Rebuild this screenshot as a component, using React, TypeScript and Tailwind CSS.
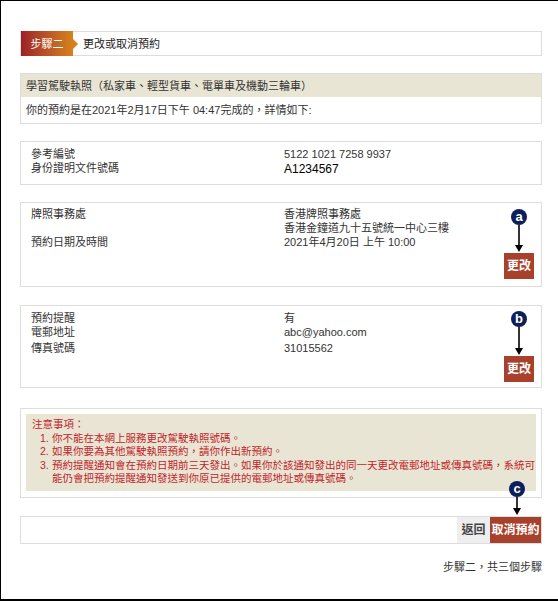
import React from 'react'

const font = "font-['Liberation_Sans','Noto_Sans_CJK_TC',sans-serif]"

function Marker({ letter, top, left, len }: { letter: string; top: number; left: number; len: number }) {
  return (
    <div className="absolute flex w-[16px] flex-col items-center" style={{ top, left }}>
      <div className="flex h-[16px] w-[16px] items-center justify-center rounded-full bg-[#0c1f5b] pb-[2px] text-[13px] font-bold leading-none text-white">
        {letter}
      </div>
      <svg width="16" height={len} viewBox={`0 0 16 ${len}`}>
        <line x1="8" y1="0" x2="8" y2={len - 5} stroke="#000" strokeWidth="1.6" />
        <polygon points={`4,${len - 7} 12,${len - 7} 8,${len}`} fill="#000" />
      </svg>
    </div>
  )
}

function EditButton() {
  return (
    <div className="flex justify-end pr-[7px]">
      <button className="h-[26px] w-[30px] bg-[#a8412b] text-[12px] font-bold text-white">更改</button>
    </div>
  )
}

export default function App() {
  return (
    <div className={`${font} relative h-[603px] w-[558px] overflow-hidden bg-white text-[11px] leading-[14px] text-[#333]`}>
      <div className="h-[601px] border-b-2 border-l border-t border-black pl-[19px] pr-[16px] pt-[30px]">
        {/* step header */}
        <div className="flex h-[25px] items-center border border-[#ddd]">
          <div className="relative flex h-[25px] w-[52px] items-center justify-center bg-gradient-to-r from-[#9d1f26] to-[#d4821d] text-white">
            步驟二
            <span className="absolute left-[52px] top-[8px] h-0 w-0 border-y-[5px] border-l-[5px] border-y-transparent border-l-[#d4821d]" />
          </div>
          <span className="ml-[10px] text-[#222]">更改或取消預約</span>
        </div>

        {/* licence summary */}
        <div className="mt-[17px] border border-[#ddd]">
          <div className="flex h-[23px] items-center bg-[#e9e5d5] pl-[5px]">學習駕駛執照（私家車、輕型貨車、電單車及機動三輪車）</div>
          <div className="flex h-[26px] items-center pl-[5px]">你的預約是在2021年2月17日下午 04:47完成的，詳情如下:</div>
        </div>

        {/* reference */}
        <div className="mt-[17px] grid grid-cols-[253px_1fr] border border-[#ddd] px-[10px] pb-[7px] pt-[5px]">
          <div>參考編號</div>
          <div>5122 1021 7258 9937</div>
          <div>身份證明文件號碼</div>
          <div className="text-[12px] leading-[16px] text-black">A1234567</div>
        </div>

        {/* office */}
        <div className="mt-[17px] border border-[#ddd] pb-[7px] pt-[4px]">
          <div className="grid grid-cols-[253px_1fr] px-[10px]">
            <div>牌照事務處</div>
            <div>
              香港牌照事務處
              <br />
              香港金鐘道九十五號統一中心三樓
            </div>
            <div>預約日期及時間</div>
            <div>2021年4月20日 上午 10:00</div>
          </div>
          <div className="mt-[4px]">
            <EditButton />
          </div>
        </div>

        {/* reminder */}
        <div className="mt-[18px] border border-[#ddd] pb-[5px] pt-[5px]">
          <div className="grid grid-cols-[253px_1fr] px-[10px]">
            <div>預約提醒</div>
            <div>有</div>
            <div>電郵地址</div>
            <div>abc@yahoo.com</div>
            <div className="mt-[2px]">傳真號碼</div>
            <div className="mt-[2px]">31015562</div>
          </div>
          <div className="mt-[1px]">
            <EditButton />
          </div>
        </div>

        {/* notes */}
        <div className="mt-[20px] border border-[#ddd] px-[5px] pb-[6px] pt-[5px]">
          <div className="bg-[#e9e5d5] pb-[5px] pl-[6px] pt-[4px] text-[10.5px] leading-[13.5px] text-[#c0262b]">
            <div>注意事項：</div>
            <ol className="pl-[8px]">
              <li className="flex">
                <span className="w-[12px]">1.</span>
                <span>你不能在本網上服務更改駕駛執照號碼。</span>
              </li>
              <li className="flex">
                <span className="w-[12px]">2.</span>
                <span>如果你要為其他駕駛執照預約，請你作出新預約。</span>
              </li>
              <li className="flex">
                <span className="w-[12px] shrink-0">3.</span>
                <span>預約提醒通知會在預約日期前三天發出。如果你於該通知發出的同一天更改電郵地址或傳真號碼，系統可能仍會把預約提醒通知發送到你原已提供的電郵地址或傳真號碼。</span>
              </li>
            </ol>
          </div>
        </div>

        {/* action bar */}
        <div className="mt-[18px] flex h-[28px] justify-end border border-[#ddd]">
          <button className="w-[33px] bg-[#eeeeee] text-[12px] font-bold text-[#444]">返回</button>
          <button className="w-[51px] bg-[#a8412b] text-[12px] font-bold text-white">取消預約</button>
        </div>

        <div className="mt-[16px] text-right">步驟二，共三個步驟</div>
      </div>

      <Marker letter="a" top={209} left={511} len={27} />
      <Marker letter="b" top={311} left={511} len={28} />
      <Marker letter="c" top={481} left={509} len={18} />
    </div>
  )
}
